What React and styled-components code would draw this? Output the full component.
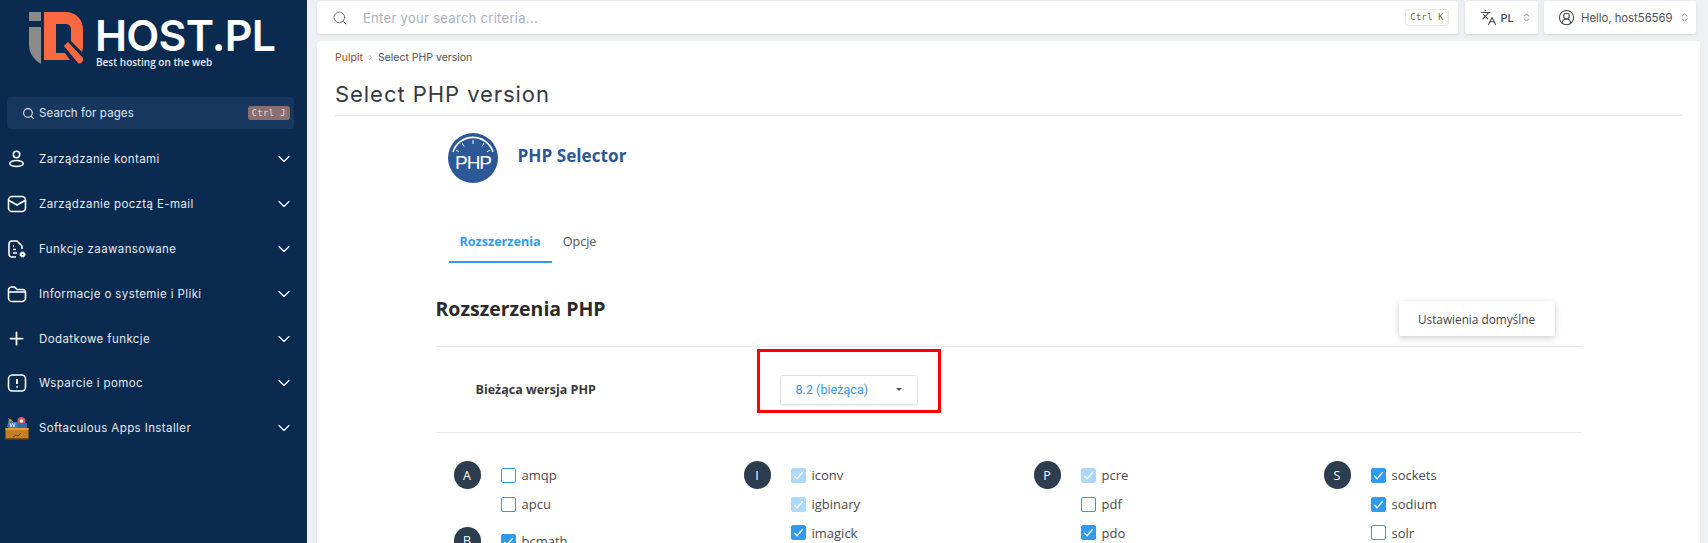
import React from "react";
import styled, { createGlobalStyle } from "styled-components";
import { ChevronDown, ChevronsUpDown, CircleUserRound, Languages, Plus, Search } from "lucide-react";

const GlobalStyle = createGlobalStyle`
  html, body {
    margin: 0;
    height: 100%;
    overflow: hidden;
    background: #eff0f4;
  }
  * { box-sizing: border-box; }
`;

const Layout = styled.div`
  display: flex;
  height: 543px;
  overflow: hidden;
  font-family: "Open Sans", sans-serif;
`;

const Sidebar = styled.aside`
  width: 307px;
  flex-shrink: 0;
  background: #0a2a50;
  padding: 12px 0 0 7px;
`;

const LogoRow = styled.div`
  display: flex;
  gap: 10px;
  padding-left: 22px;
  height: 85px;
`;

const LogoText = styled.div`
  display: flex;
  flex-direction: column;
  padding-top: 2px;
  color: #fff;
`;

const LogoName = styled.div`
  font-family: "Inter", sans-serif;
  font-weight: 600;
  font-size: 43px;
  line-height: 42px;
  letter-spacing: -0.8px;
`;

const LogoSlogan = styled.div`
  font-family: "Open Sans", sans-serif;
  font-weight: 600;
  font-size: 10px;
  line-height: 12px;
  margin-left: 1px;
  color: #e8ecf1;
`;

const PageSearch = styled.div`
  width: 287px;
  height: 32px;
  background: #17375f;
  border-radius: 4px;
  display: flex;
  align-items: center;
  padding: 0 4px 0 15px;
  color: #dfe5ec;
  font-family: "Inter", sans-serif;
  font-size: 11.5px;
  letter-spacing: 0.1px;
  svg { margin-right: 4px; }
`;

const DarkKey = styled.span`
  margin-left: auto;
  background: #8a6f70;
  color: #e6dfdf;
  border-radius: 3px;
  padding: 0 4px;
  height: 14px;
  line-height: 14px;
  font-family: "DejaVu Sans Mono", monospace;
  font-size: 8.5px;
  letter-spacing: 0.6px;
`;

const Menu = styled.nav`
  margin: 8px 0 0 -7px;
`;

const MenuRow = styled.div`
  display: flex;
  align-items: center;
  height: 44.8px;
  padding: 0 13px 0 7px;
  color: #e6eaef;
  font-family: "Inter", sans-serif;
  font-size: 11.5px;
  letter-spacing: 0.4px;
`;

const MenuIcon = styled.span`
  width: 32px;
  display: flex;
  justify-content: flex-start;
  flex-shrink: 0;
`;

const MenuChevron = styled(ChevronDown)`
  margin-left: auto;
`;

const Main = styled.main`
  flex: 1;
  min-width: 0;
  padding: 1px 8px 0 10px;
`;

const TopBar = styled.header`
  display: flex;
  gap: 6.5px;
  height: 33px;
  padding-right: 4px;
`;

const TopBox = styled.div`
  background: #fff;
  border-radius: 3px;
  box-shadow: 0 1px 3px rgba(40, 50, 70, 0.12);
  display: flex;
  align-items: center;
  height: 33px;
  color: #4b4f58;
`;

const SearchBox = styled(TopBox)`
  flex: 1;
  padding: 0 9px 0 15px;
`;

const SearchHint = styled.span`
  margin-left: 15px;
  color: #aab0bf;
  font-family: "Inter", sans-serif;
  font-size: 13px;
  letter-spacing: 0.3px;
`;

const LightKey = styled.span`
  margin-left: auto;
  border: 1px solid #e6e7ec;
  border-radius: 3px;
  height: 17px;
  line-height: 15px;
  padding: 0 4px;
  font-family: "DejaVu Sans Mono", monospace;
  font-size: 8.5px;
  letter-spacing: 0.5px;
  color: #7a5f4a;
`;

const LangBox = styled(TopBox)`
  width: 73px;
  padding-left: 15px;
  gap: 4px;
  font-family: "Inter", sans-serif;
  font-size: 11px;
  font-weight: 500;
  color: #3a4a63;
  svg:last-child { margin-left: 3px; }
`;

const UserBox = styled(TopBox)`
  width: 152px;
  padding-left: 14px;
  gap: 6px;
  font-family: "Inter", sans-serif;
  font-size: 11.3px;
  white-space: nowrap;
`;

const Card = styled.section`
  margin-top: 7px;
  background: #fff;
  border-radius: 3px;
  padding: 0 18px;
  height: 520px;
  box-shadow: 0 1px 3px rgba(40, 50, 70, 0.08);
`;

const Crumbs = styled.div`
  padding-top: 5px;
  height: 27px;
  font-family: "Inter", sans-serif;
  font-size: 10.5px;
  color: #4c5159;
  display: flex;
  align-items: center;
  gap: 3px;
`;

const CrumbLink = styled.a`
  color: #9c4a22;
`;

const PageTitle = styled.h1`
  margin: 0;
  padding-top: 11px;
  height: 48px;
  border-bottom: 1px solid #e4e6ea;
  font-family: "Inter", sans-serif;
  font-weight: 400;
  font-size: 22px;
  line-height: 30px;
  letter-spacing: 0.95px;
  color: #36393f;
`;

const Selector = styled.div`
  width: 1146px;
  margin: 0 auto;
`;

const Brand = styled.div`
  display: flex;
  gap: 20px;
  padding: 17px 0 0 12px;
  height: 116px;
`;

const BrandName = styled.div`
  font-weight: 700;
  font-size: 17.2px;
  line-height: 24px;
  margin-top: 11px;
  color: #2c5897;
`;

const Tabs = styled.div`
  display: flex;
  padding-left: 13px;
`;

const Tab = styled.div`
  height: 20px;
  box-sizing: content-box;
  padding: 0 11px 9px;
  font-size: 12.6px;
  line-height: 20px;
  font-weight: ${(p) => (p.$active ? 700 : 400)};
  color: ${(p) => (p.$active ? "#2f9bf0" : "#555")};
  border-bottom: 2px solid ${(p) => (p.$active ? "#2f9bf0" : "transparent")};
`;

const SectionHead = styled.div`
  display: flex;
  justify-content: space-between;
  height: 84px;
  border-bottom: 1px solid #e9eaed;
`;

const SectionTitle = styled.h2`
  margin: 31px 0 0;
  font-size: 19.5px;
  line-height: 30px;
  font-weight: 700;
  color: #2a2a2a;
`;

const DefaultsButton = styled.button`
  margin: 38px 27px 0 0;
  width: 156px;
  height: 35px;
  border: 0;
  background: #fff;
  border-radius: 2px;
  box-shadow: 0 2px 6px rgba(0, 0, 0, 0.2);
  font-family: "Open Sans", sans-serif;
  font-size: 11.8px;
  color: #444;
`;

const VersionRow = styled.div`
  display: flex;
  align-items: center;
  height: 86px;
  border-bottom: 1px solid #e9eaed;
  padding-left: 40px;
  position: relative;
`;

const VersionLabel = styled.div`
  width: 304px;
  font-weight: 700;
  font-size: 12.5px;
  color: #3a3a3a;
`;

const SelectBox = styled.div`
  width: 138px;
  height: 30px;
  border: 1px solid #dfe1ea;
  border-radius: 3px;
  box-shadow: 0 1px 2px rgba(0, 0, 0, 0.06);
  display: flex;
  align-items: center;
  padding: 0 15px;
  font-family: "Roboto", sans-serif;
  font-size: 12.6px;
  color: #3a97ec;
`;

const Caret = styled.span`
  margin-left: auto;
  border: 3px solid transparent;
  border-top-color: #555;
  border-bottom-width: 0;
`;

const Highlight = styled.div`
  position: absolute;
  left: 321px;
  top: 2px;
  width: 184px;
  height: 64px;
  border: 3px solid #f00;
`;

const LetterGrid = styled.div`
  display: grid;
  grid-template-columns: repeat(4, 290px);
  padding: 28px 0 0 18px;
`;

const LetterColumn = styled.div`
  display: flex;
  flex-direction: column;
  gap: 8.5px;
`;

const Group = styled.div`
  display: flex;
  gap: 20px;
`;

const Letter = styled.div`
  width: 27px;
  height: 28px;
  border-radius: 50%;
  background: #2b3d4f;
  color: #fff;
  font-size: 12.5px;
  display: flex;
  align-items: center;
  justify-content: center;
  flex-shrink: 0;
`;

const ExtRow = styled.div`
  display: flex;
  align-items: center;
  gap: 6px;
  height: 28.7px;
  font-size: 13px;
  color: #4a4a4a;
`;

const Box = styled.span`
  width: 15px;
  height: 15px;
  border-radius: 2px;
  border: 1px solid #2f9bf0;
  background: ${(p) => (p.$state === "on" ? "#2f9bf0" : p.$state === "locked" ? "#aed8fa" : "#fff")};
  border-color: ${(p) => (p.$state === "locked" ? "#aed8fa" : "#2f9bf0")};
  display: flex;
  align-items: center;
  justify-content: center;
`;

const sideIcon = { width: 20, height: 20, viewBox: "0 0 20 20", fill: "none", stroke: "#fff", strokeWidth: 1.6 };

const UserIcon = () => (
  <svg {...sideIcon}>
    <circle cx="9.5" cy="5.5" r="3.2" />
    <ellipse cx="9.5" cy="14.5" rx="6.8" ry="3" />
  </svg>
);

const MailIcon = () => (
  <svg {...sideIcon}>
    <rect x="1.5" y="2.5" width="17" height="15" rx="3.5" />
    <path d="M2 6.5l8 4.5 8-4.5" />
  </svg>
);

const DocIcon = () => (
  <svg {...sideIcon}>
    <path d="M9 18H5a3 3 0 0 1-3-3V5a3 3 0 0 1 3-3h5l5 5v3" />
    <path d="M6 7h1M6 10.5h3M6 14h4" />
    <circle cx="15.5" cy="15.5" r="2.6" fill="#fff" strokeWidth="1" strokeDasharray="1.4 0.7" />
    <circle cx="15.5" cy="15.5" r="0.8" fill="#0a2a50" stroke="none" />
  </svg>
);

const FolderIcon = () => (
  <svg {...sideIcon}>
    <path d="M1.5 6a3 3 0 0 1 3-3h3l2.5 2.5h5.5a3 3 0 0 1 3 3V14a3.5 3.5 0 0 1-3.5 3.5H5A3.5 3.5 0 0 1 1.5 14z" />
    <path d="M2 8h16" />
  </svg>
);

const AlertIcon = () => (
  <svg {...sideIcon}>
    <rect x="1.5" y="2" width="17" height="16" rx="4" />
    <path d="M10 6v5M10 13.2v1.4" strokeWidth="2" />
  </svg>
);

const SoftaculousIcon = () => (
  <svg width="24" height="24" viewBox="0 0 24 24" style={{ marginLeft: -2 }}>
    <path d="M2 11l2-8 4 2 1 6z" fill="#4d9a4a" />
    <path d="M3 6h10v6H3z" fill="#3f79b8" />
    <path d="M5 7l1 4 1.5-4 1.5 4 1-4" stroke="#fff" strokeWidth="0.7" fill="none" />
    <path d="M3 2l4 2-2 2z" fill="#e08a2c" />
    <circle cx="16.5" cy="5" r="4" fill="#d9534f" />
    <circle cx="16.5" cy="5" r="1.8" fill="#fff" />
    <path d="M13 7h9v5h-9z" fill="#2f6ea8" />
    <path d="M0.5 12h23v11h-23z" fill="#c47f22" />
    <path d="M0.5 12h23v2h-23z" fill="#e0a040" />
    <path d="M0.5 22h23v1.5h-23z" fill="#7a4d12" />
    <path d="M8 21l3-2 2 1 3-3" stroke="#444" strokeWidth="0.8" fill="none" />
  </svg>
);

const LogoMark = () => (
  <svg width="56" height="56" viewBox="0 0 56 56">
    <rect x="0" y="0" width="12" height="9" fill="#8b8b8b" />
    <path d="M0 15h12v37C5 48 0 41 0 33z" fill="#8b8b8b" />
    <path
      d="M15 0h21c11 0 18 7 18 18v17c0 2-.3 3-1 5L42 29V18c0-4-2-6-6-6H27v29h9l5 7H15z"
      fill="#f9683f"
    />
    <path d="M34 34l5-5 15 16c2 3-1 8-5 7z" fill="#f9683f" stroke="#0a2a50" strokeWidth="1.2" />
  </svg>
);

const PhpIcon = () => (
  <svg width="50" height="50" viewBox="0 0 50 50">
    <circle cx="25" cy="25" r="25" fill="#2c5897" />
    <path d="M5 19a21 21 0 0 1 40 0" fill="none" stroke="#fff" strokeWidth="1.6" />
    <path d="M25 7v4M14 10l2 3.5M36 10l-2 3.5M8 17l3 2M42 17l-3 2" stroke="#fff" strokeWidth="1" />
    <text x="25" y="36" textAnchor="middle" fontFamily="Liberation Sans" fontSize="19" letterSpacing="-1" fill="#fff">
      PHP
    </text>
  </svg>
);

const Check = ({ color }) => (
  <svg width="11" height="11" viewBox="0 0 12 12" fill="none" stroke={color} strokeWidth="1.4">
    <path d="M1.5 6.5l3 3 6-7" />
  </svg>
);

const menuItems = [
  { label: "Zarządzanie kontami", icon: <UserIcon /> },
  { label: "Zarządzanie pocztą E-mail", icon: <MailIcon /> },
  { label: "Funkcje zaawansowane", icon: <DocIcon /> },
  { label: "Informacje o systemie i Pliki", icon: <FolderIcon /> },
  { label: "Dodatkowe funkcje", icon: <Plus size={21} color="#fff" strokeWidth={2} style={{ marginLeft: -1 }} /> },
  { label: "Wsparcie i pomoc", icon: <AlertIcon /> },
  { label: "Softaculous Apps Installer", icon: <SoftaculousIcon /> },
];

const columns = [
  [
    { letter: "A", items: [["amqp", "off"], ["apcu", "off"]] },
    { letter: "B", items: [["bcmath", "on"]] },
  ],
  [{ letter: "I", items: [["iconv", "locked"], ["igbinary", "locked"], ["imagick", "on"]] }],
  [{ letter: "P", items: [["pcre", "locked"], ["pdf", "off"], ["pdo", "on"]] }],
  [{ letter: "S", items: [["sockets", "on"], ["sodium", "on"], ["solr", "off"]] }],
];

export default function App() {
  return (
    <Layout>
      <GlobalStyle />
      <Sidebar>
        <LogoRow>
          <LogoMark />
          <LogoText>
            <LogoName>HOST.PL</LogoName>
            <LogoSlogan>Best hosting on the web</LogoSlogan>
          </LogoText>
        </LogoRow>
        <PageSearch>
          <Search size={13} color="#dfe5ec" />
          Search for pages
          <DarkKey>Ctrl J</DarkKey>
        </PageSearch>
        <Menu>
          {menuItems.map((item) => (
            <MenuRow key={item.label}>
              <MenuIcon>{item.icon}</MenuIcon>
              {item.label}
              <MenuChevron size={20} color="#fff" strokeWidth={1.4} />
            </MenuRow>
          ))}
        </Menu>
      </Sidebar>
      <Main>
        <TopBar>
          <SearchBox>
            <Search size={16} color="#6b7280" strokeWidth={1.5} />
            <SearchHint>Enter your search criteria...</SearchHint>
            <LightKey>Ctrl K</LightKey>
          </SearchBox>
          <LangBox>
            <Languages size={17} color="#444" strokeWidth={1.5} />
            PL
            <ChevronsUpDown size={11} color="#888" />
          </LangBox>
          <UserBox>
            <CircleUserRound size={17} color="#444" strokeWidth={1.5} />
            Hello, host56569
            <ChevronsUpDown size={11} color="#888" />
          </UserBox>
        </TopBar>
        <Card>
          <Crumbs>
            <CrumbLink>Pulpit</CrumbLink>
            <ChevronDown size={9} color="#aaa" style={{ transform: "rotate(-90deg)" }} />
            Select PHP version
          </Crumbs>
          <PageTitle>Select PHP version</PageTitle>
          <Selector>
            <Brand>
              <PhpIcon />
              <BrandName>PHP Selector</BrandName>
            </Brand>
            <Tabs>
              <Tab $active>Rozszerzenia</Tab>
              <Tab>Opcje</Tab>
            </Tabs>
            <SectionHead>
              <SectionTitle>Rozszerzenia PHP</SectionTitle>
              <DefaultsButton>Ustawienia domyślne</DefaultsButton>
            </SectionHead>
            <VersionRow>
              <VersionLabel>Bieżąca wersja PHP</VersionLabel>
              <SelectBox>
                8.2 (bieżąca)
                <Caret />
              </SelectBox>
              <Highlight />
            </VersionRow>
            <LetterGrid>
              {columns.map((groups) => (
                <LetterColumn key={groups[0].letter}>
                  {groups.map((group) => (
                    <Group key={group.letter}>
                      <Letter>{group.letter}</Letter>
                      <div>
                        {group.items.map(([name, state]) => (
                          <ExtRow key={name}>
                            <Box $state={state}>{state !== "off" && <Check color="#fff" />}</Box>
                            {name}
                          </ExtRow>
                        ))}
                      </div>
                    </Group>
                  ))}
                </LetterColumn>
              ))}
            </LetterGrid>
          </Selector>
        </Card>
      </Main>
    </Layout>
  );
}
